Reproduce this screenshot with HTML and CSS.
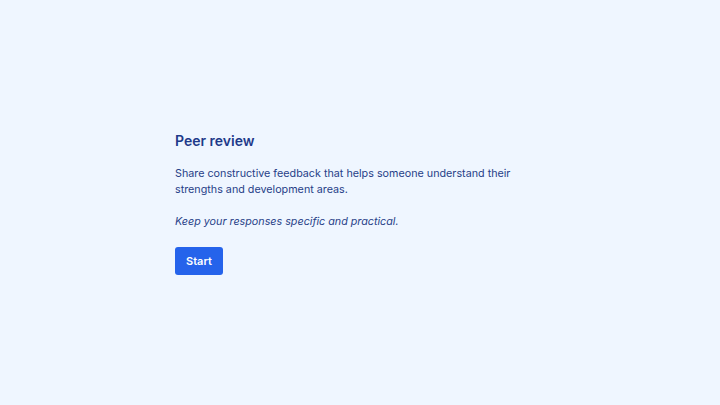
FILE: index.html
```html
<!DOCTYPE html>
<html>
<head>
<meta charset="utf-8">
<link rel="stylesheet" href="styles.css">
</head>
<body>
<main class="page">
  <section class="card">
    <h1 class="title">Peer review</h1>
    <p class="lead">Share constructive feedback that helps someone understand their strengths and development areas.</p>
    <p class="note">Keep your responses specific and practical.</p>
    <button class="start">Start</button>
  </section>
</main>
</body>
</html>
```
FILE: styles.css
```css
html, body {
  margin: 0;
  padding: 0;
  height: 100%;
  background: #eff6ff;
}
body {
  font-family: "Inter", "Noto Sans", sans-serif;
  color: #1e3a8a;
}
.page {
  height: 100%;
  display: flex;
  align-items: center;
  justify-content: center;
}
.card {
  width: 370px;
  display: flex;
  flex-direction: column;
  align-items: flex-start;
}
.title {
  margin: 0;
  font-size: 14px;
  line-height: 20px;
  font-weight: 600;
  color: #1e3a8a;
}
.lead {
  margin: 15px 0 0;
  font-size: 10.75px;
  line-height: 16px;
  color: #273f88;
}
.note {
  margin: 16px 0 0;
  font-size: 10.75px;
  line-height: 16px;
  font-style: italic;
  color: #273f88;
}
.start {
  margin-top: 17px;
  height: 28px;
  padding: 0 11px;
  border: none;
  border-radius: 3px;
  background: #2563eb;
  color: #ffffff;
  font-family: "Inter", "Noto Sans", sans-serif;
  font-size: 11px;
  font-weight: 600;
}
```
